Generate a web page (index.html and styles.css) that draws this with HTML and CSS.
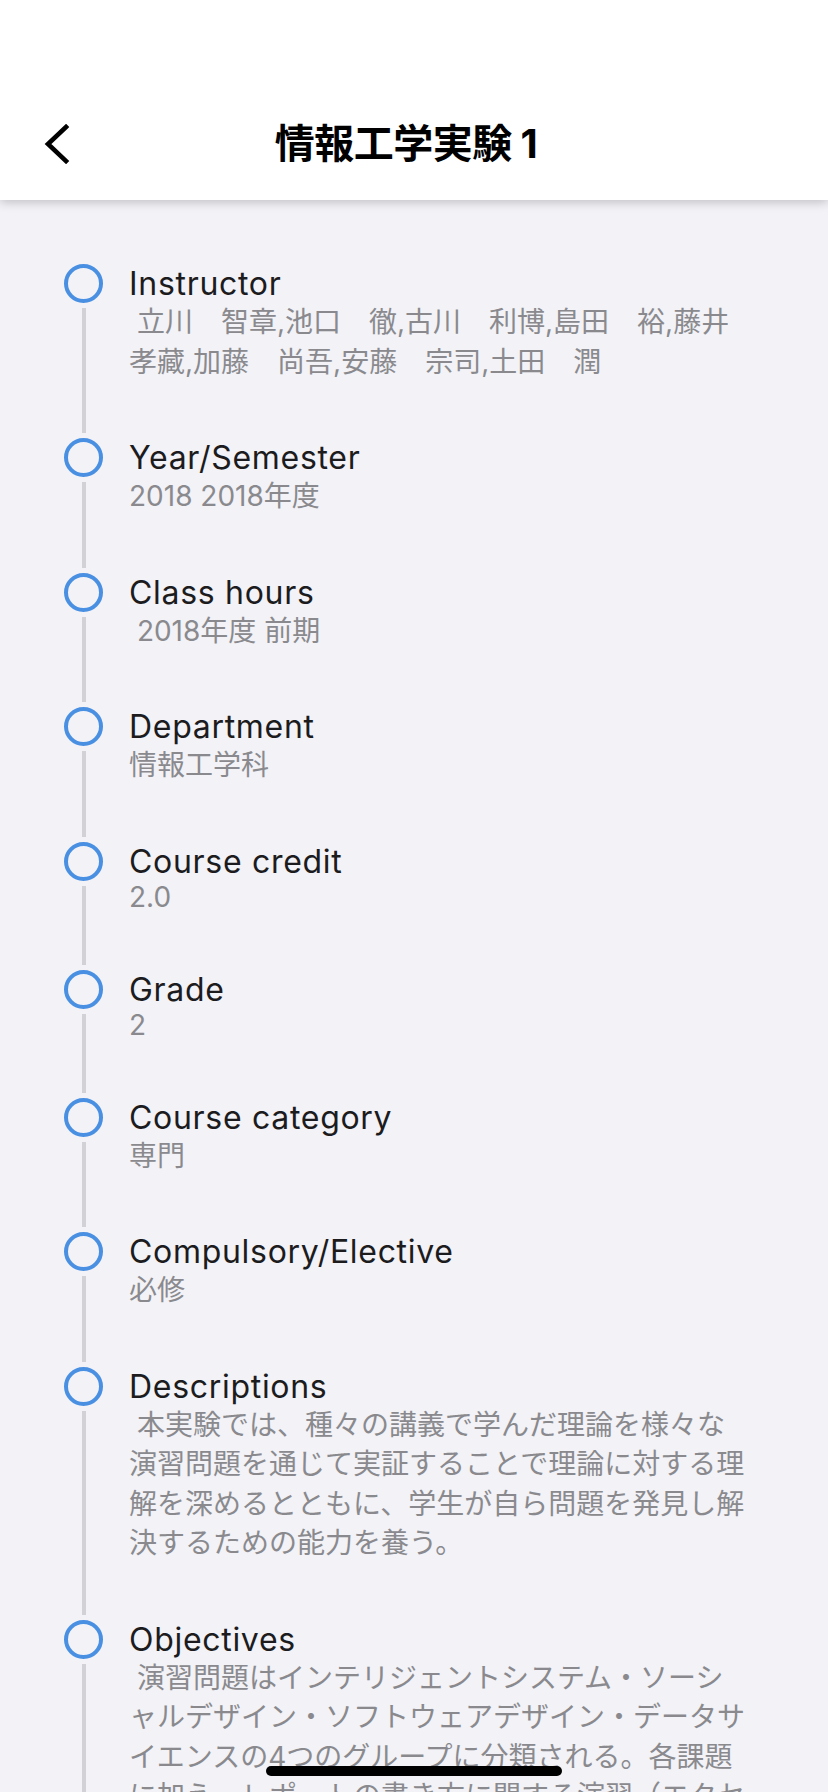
FILE: index.html
```html
<!DOCTYPE html>
<html lang="ja">
<head>
<meta charset="utf-8">
<title>情報工学実験 1</title>
<link rel="stylesheet" href="styles.css">
</head>
<body>
<header class="header">
  <nav class="nav">
    <div class="nav-back">
      <svg class="chevron" width="28" height="40" viewBox="0 0 28 40" aria-hidden="true">
        <path d="M24 3 L6 20 L24 37" fill="none" stroke="#000" stroke-width="4.6" stroke-linecap="square" stroke-linejoin="miter"/>
      </svg>
    </div>
    <h1 class="nav-title">情報工学実験 1</h1>
    <div class="nav-spacer"></div>
  </nav>
</header>

<main class="timeline">
  <section class="item">
    <div class="marker"><span class="dot"></span><span class="rail"></span></div>
    <div class="content">
      <h2 class="label">Instructor</h2>
      <p class="value"> 立川　智章,池口　徹,古川　利博,島田　裕,藤井　孝藏,加藤　尚吾,安藤　宗司,土田　潤</p>
    </div>
  </section>
  <section class="item">
    <div class="marker"><span class="dot"></span><span class="rail"></span></div>
    <div class="content">
      <h2 class="label">Year/Semester</h2>
      <p class="value">2018 2018年度</p>
    </div>
  </section>
  <section class="item">
    <div class="marker"><span class="dot"></span><span class="rail"></span></div>
    <div class="content">
      <h2 class="label">Class hours</h2>
      <p class="value"> 2018年度 前期</p>
    </div>
  </section>
  <section class="item">
    <div class="marker"><span class="dot"></span><span class="rail"></span></div>
    <div class="content">
      <h2 class="label">Department</h2>
      <p class="value">情報工学科</p>
    </div>
  </section>
  <section class="item">
    <div class="marker"><span class="dot"></span><span class="rail"></span></div>
    <div class="content">
      <h2 class="label">Course credit</h2>
      <p class="value value-latin">2.0</p>
    </div>
  </section>
  <section class="item">
    <div class="marker"><span class="dot"></span><span class="rail"></span></div>
    <div class="content">
      <h2 class="label">Grade</h2>
      <p class="value value-latin">2</p>
    </div>
  </section>
  <section class="item">
    <div class="marker"><span class="dot"></span><span class="rail"></span></div>
    <div class="content">
      <h2 class="label">Course category</h2>
      <p class="value">専門</p>
    </div>
  </section>
  <section class="item">
    <div class="marker"><span class="dot"></span><span class="rail"></span></div>
    <div class="content">
      <h2 class="label">Compulsory/Elective</h2>
      <p class="value">必修</p>
    </div>
  </section>
  <section class="item">
    <div class="marker"><span class="dot"></span><span class="rail"></span></div>
    <div class="content">
      <h2 class="label">Descriptions</h2>
      <p class="value"> 本実験では、種々の講義で学んだ理論を様々な演習問題を通じて実証することで理論に対する理解を深めるとともに、学生が自ら問題を発見し解決するための能力を養う。</p>
    </div>
  </section>
  <section class="item">
    <div class="marker"><span class="dot"></span><span class="rail"></span></div>
    <div class="content">
      <h2 class="label">Objectives</h2>
      <p class="value"> 演習問題はインテリジェントシステム・ソーシャルデザイン・ソフトウェアデザイン・データサイエンスの4つのグループに分類される。各課題に加え、レポートの書き方に関する演習（エクセル演習）を行う。</p>
    </div>
  </section>
</main>

<div class="home-indicator"></div>
</body>
</html>
```

FILE: styles.css
```css
* {
  box-sizing: border-box;
}

html, body {
  margin: 0;
  padding: 0;
}

body {
  background: #f2f2f7;
  font-family: Inter, "Noto Sans CJK JP", sans-serif;
  color: #1c1c1e;
  min-height: 1792px;
}

.header {
  background: #ffffff;
  padding-top: 88px;
  box-shadow: 0 2px 10px rgba(0, 0, 0, 0.22);
  position: relative;
  z-index: 2;
}

.nav {
  height: 112px;
  display: grid;
  grid-template-columns: 96px 1fr 112px;
  align-items: center;
}

.nav-back {
  padding-left: 42px;
  display: flex;
  align-items: center;
}

.chevron {
  display: block;
}

.nav-title {
  margin: 0;
  text-align: center;
  font-size: 40px;
  font-weight: 700;
  color: #000;
  line-height: 48px;
  letter-spacing: -0.5px;
}

.timeline {
  padding: 64px 0 0 64px;
}

.item {
  display: flex;
  gap: 26px;
}

.marker {
  width: 39px;
  flex: none;
  display: flex;
  flex-direction: column;
  align-items: center;
}

.dot {
  width: 39px;
  height: 39px;
  border-radius: 50%;
  border: 4px solid #4a90e2;
  flex: none;
}

.rail {
  flex: 1;
  width: 4px;
  background: #d1d1d6;
  margin: 5px 0;
}

.content {
  width: 618px;
  padding-bottom: 56px;
}

.label {
  margin: 0;
  font-size: 32px;
  font-weight: 400;
  line-height: 39px;
  letter-spacing: 0.7px;
  color: #1c1c1e;
}

.value {
  margin: 0;
  font-size: 28px;
  line-height: 39.5px;
  color: #8a8a8e;
  white-space: pre-wrap;
}

.value-latin {
  line-height: 33px;
}

.home-indicator {
  position: fixed;
  left: 0;
  right: 0;
  bottom: 16px;
  margin: 0 auto;
  width: 296px;
  height: 10px;
  border-radius: 5px;
  background: #000;
  z-index: 5;
}
```
